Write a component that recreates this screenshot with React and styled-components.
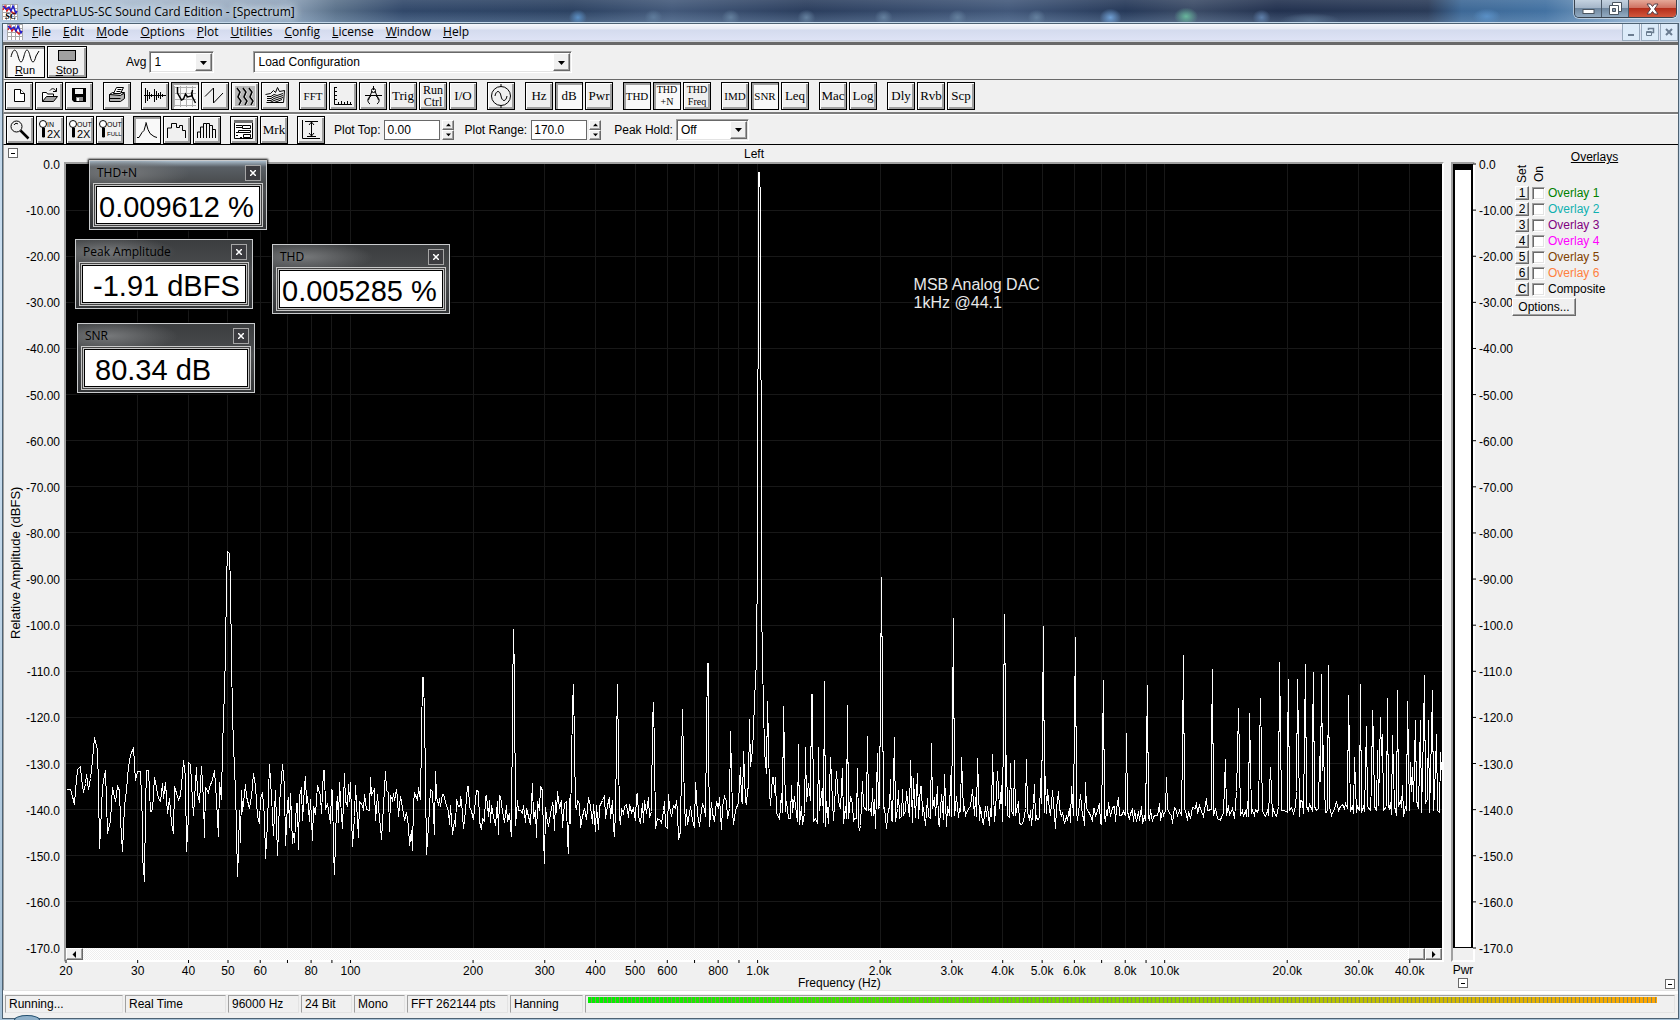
import React from 'react'
import styled, { createGlobalStyle, css } from 'styled-components'

const GlobalStyle = createGlobalStyle`
*{
  box-sizing:border-box;
}
body{
  margin:0;
  background:#f0f0f0;
  font-family:"Liberation Sans", Arial, sans-serif;
  font-size:12px;
  color:#000;
}
button, input, select{
  font:inherit;
  color:inherit;
  margin:0;
  padding:0;
}
`

const raised = css`
background:#f0f0f0;
border:1px solid;
border-color:#fff #696969 #696969 #fff;
box-shadow:inset -1px -1px #a0a0a0;
`

/* window frame */
const Window = styled.div`
height:100vh;
min-height:600px;
display:flex;
flex-direction:column;
position:relative;
overflow:hidden;
background:linear-gradient(180deg, #b4cbe0 0%, #cfe2f3 30%, #a5c0d6 100%);
`
const TitleBar = styled.header`
height:23px;
flex:none;
display:flex;
align-items:flex-start;
padding:4px 3px 0px 2px;
border-bottom:1px solid #c4d8ea;
background:
  radial-gradient(ellipse 9px 8px at 34.4% 80%, #5b8fc4, transparent),
  radial-gradient(ellipse 9px 8px at 38.9% 80%, #5f7c9c, transparent),
  radial-gradient(ellipse 9px 8px at 43.5% 80%, #64809e, transparent),
  radial-gradient(ellipse 9px 8px at 48% 80%, #64809e, transparent),
  radial-gradient(ellipse 9px 8px at 52.6% 80%, #64809e, transparent),
  radial-gradient(ellipse 9px 8px at 57% 80%, #64809e, transparent),
  radial-gradient(ellipse 9px 8px at 61.7% 80%, #64809e, transparent),
  radial-gradient(ellipse 11px 9px at 66.1% 80%, #6f9fd4, transparent),
  radial-gradient(ellipse 12px 9px at 70.6% 75%, #68b79c, transparent),
  radial-gradient(ellipse 9px 8px at 75.1% 80%, #5f80ab, transparent),
  radial-gradient(ellipse 30px 8px at 78% 95%, #57708e, transparent),
  radial-gradient(ellipse 14px 8px at 88.5% 75%, #5a90c6, transparent),
  linear-gradient(180deg, rgba(255,255,255,0.1), rgba(255,255,255,0) 50%, rgba(160,190,220,0.25)),
  linear-gradient(90deg, #b7cbe0 0%, #a3b4c8 10%, #8fa3ba 17%, #5a718a 20%, #31486a 24%, #2c4262 34%, #43597a 40%, #2b3e5e 48%, #42587a 60%, #263959 67%, #3b4b66 71%, #22314f 76%, #2a3b58 85%, #3d6896 87%, #4372a2 92%, #8eadcb 97%, #a9c3da 100%);
`
const Caption = styled.h1`
margin:0px 0px 0px 5px;
font-family:"Open Sans", sans-serif;
font-size:12px;
font-weight:400;
line-height:16px;
flex:1;
white-space:nowrap;
text-shadow:0 0 6px #dfe9f2, 0 0 8px #dfe9f2, 0 0 10px #dfe9f2;
`
const WindowButtons = styled.div`
display:flex;
height:18px;
margin-top:-4px;
border:1px solid #39434f;
border-top:none;
border-radius:0px 0px 5px 5px;
overflow:hidden;
box-shadow:0 0 0 1px rgba(255,255,255,0.5);
`
const WindowButton = styled.button`
width:${props => props.$close ? "47px" : "27px"};
border:none;
border-right:${props => props.$close ? "none" : "1px solid #4a5868"};
background:${props => props.$close
    ? "linear-gradient(180deg, #e5a898 0%, #cf7262 45%, #b52e1b 50%, #d2573c 100%)"
    : "linear-gradient(180deg, #c4d2e0 0%, #a5b6c9 45%, #6f879f 50%, #93abc2 100%)"};
display:flex;
align-items:center;
justify-content:center;
`
const Client = styled.div`
flex:1;
min-height:0;
margin:0px 1px 1px 2px;
border:1px solid #4d6273;
display:flex;
flex-direction:column;
background:#f0f0f0;
`
const MenuBar = styled.nav`
height:21px;
flex:none;
display:flex;
padding-left:4px;
border-bottom:3px solid #696969;
background:linear-gradient(180deg, #f6f8fc 0px, #e6eaf5 5px, #d4dbee 6px, #dee3f5 16px, #b4bccb 17px, #f0f0f0 18px);
`
const MenuList = styled.div`
display:flex;
flex:1;
padding-left:3px;
`
const MenuItem = styled.button`
border:none;
background:none;
padding:0px 6px;
font-family:"Open Sans", sans-serif;
font-size:12px;
line-height:16px;
height:16px;
&::first-letter{
  text-decoration:underline;
}
`
const MdiButton = styled.button`
width:18px;
height:17px;
margin-left:1px;
border:1px solid #98aabd;
border-top:none;
background:#dcebf9;
display:flex;
align-items:center;
justify-content:center;
`

/* toolbars */
const ToolRow = styled.div`
flex:none;
display:flex;
align-items:${props => props.$center ? "center" : "flex-start"};
height:${props => props.$height};
padding:${props => props.$pad};
border-left:1px solid #a0a0a0;
border-bottom:${props => props.$line};
box-shadow:${props => props.$lit ? "inset 0 1px #fff" : "none"};
`
const ToolGroup = styled.div`
display:flex;
gap:2px;
margin-right:${props => props.$gap || "10px"};
`
const toolFont = props => {
  if (props.$wide) return "11px"
  if (props.$caps) return props.$stacked ? "10px" : "11px"
  return props.$stacked ? "12px" : "13px"
}
const ToolButton = styled.button`
width:${props => props.$wide ? "40px" : "28px"};
height:${props => props.$wide ? "32px" : "28px"};
border:1px solid #000;
background:${props => props.$down ? "#f9f9f9" : "#f0f0f0"};
box-shadow:${props => props.$down
    ? "inset 2px 2px #a0a0a0"
    : "inset 1px 1px #fff, inset -2px -2px #a0a0a0"};
display:flex;
flex-direction:column;
align-items:center;
justify-content:center;
overflow:hidden;
font-family:${props => props.$wide ? "inherit" : '"Liberation Serif", "Times New Roman", serif'};
font-size:${toolFont};
line-height:12px;
`
const Field = styled.label`
display:flex;
align-items:center;
gap:4px;
margin-left:${props => props.$left || "0px"};
white-space:nowrap;
`
const Combo = styled.div`
display:flex;
width:${props => props.$width};
height:22px;
padding:1px;
background:#fff;
border:1px solid;
border-color:#a0a0a0 #fff #fff #a0a0a0;
box-shadow:inset 1px 1px #696969, inset -1px -1px #e3e3e3;
margin-left:${props => props.$left || "0px"};
select{
  flex:1;
  min-width:0;
  border:none;
  background:none;
  appearance:none;
  padding-left:3px;
  outline:none;
}
`
const ComboArrow = styled.span`
${raised}
width:17px;
display:flex;
align-items:center;
justify-content:center;
`
const TextBox = styled.input`
width:56px;
height:20px;
border:1px solid #696969;
background:#fff;
padding-left:2px;
`
const Spinner = styled.div`
display:flex;
flex-direction:column;
margin-left:-2px;
`
const SpinButton = styled.button`
${raised}
width:12px;
height:10px;
display:flex;
align-items:center;
justify-content:center;
`

/* spectrum view */
const View = styled.main`
flex:1;
min-height:0;
display:flex;
position:relative;
border-left:1px solid #a0a0a0;
border-right:1px solid #e3e3e3;
`
const Channel = styled.section`
flex:1;
min-width:0;
display:grid;
grid-template-columns:60px minmax(0, 1fr);
grid-template-rows:17px minmax(0, 1fr) 14px 28px;
`
const ToggleButton = styled.button`
width:10px;
height:10px;
border:1px solid #696969;
background:#fff;
display:flex;
align-items:center;
justify-content:center;
margin:${props => props.$margin || "0px"};
`
const ChannelTitle = styled.h2`
margin:0px;
padding-top:1px;
font-size:12px;
font-weight:400;
line-height:16px;
text-align:center;
`
const AxisColumn = styled.div`
display:flex;
padding-top:2px;
`
const AxisTitle = styled.div`
width:24px;
padding-bottom:14px;
writing-mode:vertical-rl;
transform:rotate(180deg);
text-align:center;
font-size:13px;
line-height:24px;
`
const AxisDrawing = styled.svg`
flex:1;
min-width:0;
height:100%;
overflow:visible;
font-size:12px;
`
const Plot = styled.div`
border-left:2px solid #a0a0a0;
border-top:2px solid #a0a0a0;
border-right:2px solid #fff;
background:#000;
display:grid;
svg{
  grid-area:1 / 1;
  width:100%;
  height:100%;
  display:block;
}
`
const ScrollBar = styled.div`
grid-column:2;
display:flex;
border-left:2px solid #a0a0a0;
border-right:2px solid #fff;
border-bottom:2px solid #fff;
background:repeating-conic-gradient(#fff 0% 25%, #eee 0% 50%) 0 0 / 2px 2px;
`
const ScrollButton = styled.button`
${raised}
width:17px;
height:12px;
display:flex;
align-items:center;
justify-content:center;
margin-left:${props => props.$end ? "auto" : "0px"};
`
const TimeAxis = styled.div`
grid-column:2;
padding:0px 2px;
svg{
  width:100%;
  height:28px;
}
`
const Power = styled.section`
flex:none;
width:68px;
display:grid;
grid-template-columns:24px 1fr;
grid-template-rows:17px minmax(0, 1fr) 14px 28px;
padding-left:7px;
`
const PowerBox = styled.div`
grid-row:2 / 4;
display:flex;
flex-direction:column;
border:2px solid;
border-color:#a0a0a0 #fff #fff #a0a0a0;
`
const PowerTrack = styled.div`
flex:1;
background:#000;
padding:6px 2px 1px;
display:flex;
`
const PowerBar = styled.div`
flex:1;
background:#fff;
`
const PowerFoot = styled.div`
height:12px;
`
const PowerLabel = styled.div`
grid-row:4;
grid-column:1;
display:flex;
flex-direction:column;
align-items:center;
line-height:16px;
`
const PowerAxis = styled.div`
grid-row:2;
padding-top:2px;
display:flex;
`
const Overlays = styled.aside`
flex:none;
width:165px;
display:flex;
flex-direction:column;
padding-top:5px;
`
const OverlaysTitle = styled.h2`
margin:0px;
font-size:12px;
font-weight:400;
line-height:14px;
text-align:center;
text-decoration:underline;
`
const OverlayTable = styled.table`
border-collapse:collapse;
table-layout:fixed;
margin:0px 0px 1px 3px;
width:120px;
th{
  padding:0px;
  height:21px;
  font-weight:400;
  vertical-align:top;
}
th:first-child{
  width:17px;
}
th:nth-child(2){
  width:16px;
}
td{
  padding:0px;
  height:16px;
  line-height:14px;
}
`
const Upright = styled.span`
display:block;
height:20px;
writing-mode:vertical-rl;
transform:rotate(180deg);
line-height:14px;
`
const SetButton = styled.button`
${raised}
width:14px;
height:14px;
display:block;
line-height:11px;
`
const Tick = styled.input`
appearance:none;
display:block;
width:13px;
height:13px;
background:#fff;
border:1px solid;
border-color:#a0a0a0 #fff #fff #a0a0a0;
box-shadow:inset 1px 1px #696969, inset -1px -1px #e3e3e3;
`
const OverlayName = styled.label`
color:${props => props.color};
`
const OptionsButton = styled.button`
${raised}
width:64px;
height:18px;
line-height:15px;
`

/* floating readouts */
const Readout = styled.section`
position:absolute;
left:${props => props.$x};
top:${props => props.$y};
width:178px;
height:70px;
padding:4px 3px 2px;
border:1px solid #c9cbcd;
background:
  radial-gradient(ellipse 70px 16px at 30px 12px, #77797b, transparent),
  linear-gradient(180deg, ${props => props.$active ? "#a9bccb 0px, #5a6066 6px," : "#3b3d3f 0px,"} #47494b 24px, #4d4f51 30px, #333537 100%);
box-shadow:0 0 2px 1px #000;
`
const ReadoutHead = styled.div`
display:flex;
justify-content:space-between;
height:18px;
padding:0px 2px 0px 4px;
font-family:"Open Sans", sans-serif;
font-size:12px;
line-height:15px;
`
const ReadoutClose = styled.button`
width:16px;
height:16px;
border:1px solid #a6a6a6;
background:#3c3c40;
display:flex;
align-items:center;
justify-content:center;
`
const ReadoutValue = styled.output`
display:block;
height:44px;
border:1px solid #c8c8c8;
box-shadow:inset 0 0 0 1px #444, inset 0 0 0 2px #c8c8c8, inset 0 0 0 3px #000;
background:#fff;
padding:2px 0px 0px 5px;
font-size:29px;
line-height:42px;
white-space:pre;
`

/* status bar */
const StatusBar = styled.footer`
flex:none;
height:28px;
display:flex;
gap:2px;
padding:4px 3px 6px 2px;
border-top:1px solid #e3e3e3;
box-shadow:inset 0 3px #fff;
`
const StatusCell = styled.div`
width:${props => props.$width};
flex:${props => props.$grow ? "1" : "none"};
height:18px;
border:1px solid;
border-color:#a0a0a0 #e3e3e3 #e3e3e3 #a0a0a0;
padding-left:${props => props.$grow ? "2px" : "3px"};
line-height:16px;
white-space:nowrap;
overflow:hidden;
`
const Level = styled.div`
margin:1px 17px 0px 0px;
height:6px;
background:
  repeating-linear-gradient(90deg, transparent 0px 3px, #87875f 3px 4px),
  linear-gradient(90deg, #00f000, #9ccb00 60%, #ffa500);
`
const StartOrb = styled.div`
position:absolute;
left:14px;
bottom:0px;
width:26px;
height:5px;
border:1px solid #24506f;
border-bottom:none;
border-radius:13px 13px 0px 0px / 5px 5px 0px 0px;
background:#8fb0c9;
`

const ink = { fill: 'none', stroke: '#000', strokeWidth: 1 }

const icons = {
  newFile: <g fill="#fff" stroke="#000"><path d="M9.500 7.500h6l4 4v8h-10z" /><path d="M15.500 7.500v4h4" /></g>,
  open: <g stroke="#000"><path d="M7.500 19.500v-9h4l1 1.500h6v3" fill="#fff" /><path d="M7.500 19.500l4-5h11l-4 5z" fill="#a0a0a0" /><path d="M15 8.500c2-3 5-2 6 1M21.500 6v3.500H18" fill="none" /></g>,
  save: <g><path d="M7 6h14v14H9l-2-2z" fill="#000" /><path d="M10 7h8v5h-8z" fill="#f0f0f0" /><path d="M11 15h7v4h-7z" fill="#909090" /><path d="M12 16h2v3h-2z" fill="#fff" /></g>,
  print: <g stroke="#000"><path d="M6.500 12.500h11l4-1v5l-4 3h-11z" fill="#b0b0b0" /><path d="M6.500 12.500l3-2h12l-4 3z" fill="#e0e0e0" /><path d="M10.500 11.500l3-6h7l-3 6z" fill="#fff" /><path d="M14.500 7.500h4M13.500 9.500h4" fill="none" /><path d="M6.500 16.500h11" fill="none" /></g>,
  wave: <path d="M3 13.500h22M4.500 6v15M6.500 8v11M8.500 10v7M10.500 12v3M13.500 7v13M15.500 9v9M17.500 11v5M19.500 10v7M21.500 12v3" {...ink} />,
  spectrum: <g fill="none"><path d="M3.500 4v21M9.500 4v21M15.500 4v21M21.500 4v21M3 5.500h22M3 11.500h22M3 17.500h22M3 23.500h22" stroke="#b0b0b0" /><path d="M6.500 5v6l4 7 2-1 2-5 2 3 4-1 1-6M20.500 10l1 5 3 6" stroke="#000" strokeWidth="1.500" /></g>,
  zigzag: <path d="M4 14.500L12.500 6v15L22 11" {...ink} />,
  waterfall: <g fill="none"><rect x="4" y="4" width="20" height="20" fill="#b8b8b8" /><path d="M7 6l3 4-2 5 3 4-2 4M13 6l3 4-2 5 3 4-2 4M19 6l3 4-2 5 3 4-2 4" stroke="#fff" /><path d="M6 6l3 4-2 5 3 4-2 4M12 6l3 4-2 5 3 4-2 4M18 6l3 4-2 5 3 4-2 4" stroke="#000" strokeWidth="1.500" /></g>,
  surface: <g {...ink}><path d="M4.500 12.500l5-1 3-3 2 2 2-5 2 4 5-1-1 12H5.500" /><path d="M6 14.500h4l3-2 3 1 6-2M6 16.500h4l3-2 3 1 6-2M6 18.500h4l3-2 3 1 6-2M9 20.500l4-2 3 1 5-2" /></g>,
  ruler: <path d="M5.500 5v17.500H23M6 5.500h2M6 9.500h2M6 13.500h2M6 17.500h2M9.500 22v-2M12.500 22v-3M15.500 22v-2M18.500 22v-3M21.500 22v-2" {...ink} />,
  compass: <g {...ink}><path d="M14.500 4v4M6 13.500h17M13 9L9.500 18M16 9l3.500 9" /><circle cx="14.500" cy="8.500" r="2" /><path d="M12 14c-4 2-4 6-1 8M17 14c4 2 4 6 1 8" /></g>,
  generator: <g {...ink}><circle cx="14" cy="14" r="9.500" /><path d="M14 2v3M14 23v3M8 14c1-6 5-6 6 0s5 6 6 0" /></g>,
  zoom: <g {...ink}><circle cx="10.500" cy="10.500" r="5.500" /><path d="M14.500 14.500l8 8" strokeWidth="2.500" /><path d="M8 9c1-2 3-2 4-1" /></g>,
  peak: <path d="M4 21.500h2l3-5 2-2 2-7v-1l2 7 2 4 4 3 3 1" {...ink} />,
  steps: <path d="M4.500 22v-10h4V7.500h5v4h3v-2h3v5h3V22" {...ink} />,
  bars: <path d="M4.500 22v-6h3v6M7.500 22v-11h3v11M10.500 22V7.500h3V22M13.500 7.500h3V22M16.500 9.500h3V22M19.500 13.500h3V22" {...ink} />,
  settings: <g><path d="M4.500 5.500h18v17h-18z" fill="#fff" stroke="#000" /><path d="M4 4h19v3H4z" fill="#707070" /><path d="M6 9.500h6M6 11.500h6M6 19.500h2M10 21.500h2M6 16.500h4" stroke="#000" /><path d="M12.500 9.500h8v3h-8zM8.500 14.500h12v2h-12zM13.500 18.500h7v3h-7z" fill="#fff" stroke="#000" /></g>,
  fit: <path d="M5.500 4v18.500H23M8 5.500h13M14.500 6v14M12 9l2.500-3L17 9M12 17l2.500 3 2.500-3M10 20.500h9" {...ink} />,
}

const Icon = ({ name }) => (
  <svg width="26" height="26" viewBox="1 1 26 26" aria-hidden="true">{icons[name]}</svg>
)

/* lens glyph with a caption, e.g. IN 2X */
const ZoomIcon = ({ top, bottom, small }) => (
  <svg width="26" height="26" viewBox="1 1 26 26" fontFamily="Liberation Sans, Arial, sans-serif">
    <circle cx="7" cy="8" r="3.500" fill="#fff" stroke="#000" />
    <path d="M6.500 12h2v9h-2z" fill="#000" stroke="#000" />
    <text x="11" y="11" fontSize="7">{top}</text>
    <text x="11" y={small ? "20" : "22"} fontSize={small ? "6" : "11"}>{bottom}</text>
  </svg>
)

const AppIcon = ({ label }) => (
  <svg width="16" height="16" viewBox="0 0 16 16" aria-hidden="true">
    <rect width="16" height="16" fill="#fff" />
    <path d="M0 .5h16M0 4.500h16M0 8.500h16M0 12.500h16M.5 0v16M4.500 0v16M8.500 0v16M12.500 0v16M15.500 0v16" stroke="#a8a8a8" />
    <path d="M1 6l2-4 2 5 2-3 2 3 3 3 3-3" fill="none" stroke="#d22" strokeWidth="1.500" />
    <path d="M1 2l3 3 3-2 2 4 2-5 3 7 1-2" fill="none" stroke="#22c" strokeWidth="1.500" />
    {label && <text x="3" y="15" fontSize="9" fontStyle="italic" fontWeight="700" fontFamily="Liberation Serif, serif">SC</text>}
  </svg>
)

const Arrow = ({ d, size = 7 }) => (
  <svg width={size} height={size} viewBox="0 0 7 7" aria-hidden="true"><path d={d} fill="#000" /></svg>
)
const DOWN = "M0 2h7L3.500 6z"
const UP = "M0 6h7L3.500 2z"
const LEFT = "M5 0v7L1.500 3.500z"
const RIGHT = "M2 0v7l3.500-3.500z"

const menus = ["File", "Edit", "Mode", "Options", "Plot", "Utilities", "Config", "License", "Window", "Help"]

const mainTools = [
  [{ icon: "newFile" }, { icon: "open" }, { icon: "save" }],
  [{ icon: "print" }],
  [{ icon: "wave" }, { icon: "spectrum", down: true }, { icon: "zigzag" }, { icon: "waterfall" }, { icon: "surface" }],
  [{ text: ["FFT"], caps: true }, { icon: "ruler" }, { icon: "compass" }, { text: ["Trig"] }, { text: ["Run", "Ctrl"] }, { text: ["I/O"] }],
  [{ icon: "generator" }],
  [{ text: ["Hz"] }, { text: ["dB"], down: true }, { text: ["Pwr"] }],
  [{ text: ["THD"], caps: true, down: true }, { text: ["THD", "+N"], caps: true, down: true }, { text: ["THD", "Freq"], caps: true }],
  [{ text: ["IMD"], caps: true }, { text: ["SNR"], caps: true, down: true }, { text: ["Leq"] }],
  [{ text: ["Mac"] }, { text: ["Log"] }],
  [{ text: ["Dly"] }, { text: ["Rvb"] }, { text: ["Scp"] }],
]

const overlays = [
  ["1", "Overlay 1", "#008000"],
  ["2", "Overlay 2", "#10b0b0"],
  ["3", "Overlay 3", "#800080"],
  ["4", "Overlay 4", "#ff00ff"],
  ["5", "Overlay 5", "#804000"],
  ["6", "Overlay 6", "#ff8040"],
  ["C", "Composite", "#000"],
]

const readouts = [
  { name: "THD+N", value: "0.009612 %", x: "85px", y: "15px", active: true },
  { name: "Peak Amplitude", value: " -1.91 dBFS", x: "71px", y: "94px" },
  { name: "THD", value: "0.005285 %", x: "268px", y: "99px" },
  { name: "SNR", value: " 80.34 dB", x: "73px", y: "178px" },
]

const status = [
  ["Running...", "118px"],
  ["Real Time", "101px"],
  ["96000 Hz", "71px"],
  ["24 Bit", "51px"],
  ["Mono", "51px"],
  ["FFT 262144 pts", "101px"],
  ["Hanning", "73px"],
]

const levels = [...Array(18).keys()].map(i => {
  const db = i * 10
  return { label: i === 0 ? "0.0" : db < 100 ? `-${db}.00` : `-${db}.0`, y: `${i / 17 * 100}%` }
})

const F_MIN = 20
const F_MAX = 48000
const freqX = f => `${Math.log(f / F_MIN) / Math.log(F_MAX / F_MIN) * 100}%`
const freqs = [10, 100, 1000, 10000]
  .flatMap(d => [1, 2, 3, 4, 5, 6, 7, 8, 9].map(m => m * d))
  .filter(f => f >= F_MIN && f < F_MAX)
const freqLabel = f => {
  if (/^[79]/.test(String(f))) return null
  return f < 1000 ? String(f) : `${(f / 1000).toFixed(1)}k`
}

// spectrum samples, four sweeps with their own origin, in thirds of a plot unit
const sweeps = [
  {
    x: -6, y: 376, points: `18,748 32,748 37,770 43,793 47,750 52,688 61,680 65,715 70,757 75,730 80,703 85,748 90,715 95,690 103,592 112,630 114,740 118,926 122,870 127,740 136,691 140,780 143,880 150,840 157,742 166,784 173,739 178,752 182,840 187,934 193,800 200,750 205,680 210,645 220,622 226,720 233,694 241,694 246,850 248,950 253,1024 257,800 260,691 265,691 271,814 277,812 283,712 295,775 301,784 307,730 310,775 316,728 323,820 328,775 334,850 340,880 344,740 355,778 361,765 366,700 370,661 376,712 380,934 384,830 386,668 391,672 396,780 400,826 405,730 409,682 413,760 418,787 422,730 425,679 430,780 433,892 437,742 445,757 450,730 455,730 463,691 468,780 475,889 478,728 484,778 488,620 491,540 496,345 500,125 502,35 508,40 511,140 514,355 517,525 520,610 524,690 527,745 530,870 532,1010 536,930 538,812 541,908 544,752 548,815 556,733 560,770 568,805 573,770 580,700 586,740 592,828 598,850 602,775 608,757 612,830 616,956 621,850 628,673 633,770 640,886 647,752 652,946 658,790 668,673 672,740 676,916 682,790 685,772 688,862 691,760 697,910 701,880 704,907 710,790 712,790 715,928 719,770 725,742 728,840 732,740 736,710 740,790 743,770 748,845 752,778 757,902 761,800 767,822 772,736 780,765 784,820 789,691 793,691 797,808 802,790 811,850 815,748 818,750 821,935 823,1004 828,800 833,770 836,848 839,728 843,826 848,865 853,700 857,785 862,796 866,733 868,785 872,728 877,920 883,830 887,737 890,790 895,892 899,785 908,796 911,810 914,763 920,808 928,812 931,712 935,766 942,745 946,841 952,763 957,835 962,860 965,898 971,800 976,694 980,750 984,758 988,875 992,766 998,780 1001,760 1004,780 1009,748 1013,775 1016,829 1020,768 1030,820 1034,841 1038,817 1044,860 1048,916 1053,870 1057,932 1061,790 1064,758 1073,780 1076,742 1082,778 1084,595 1087,412 1091,412 1093,530 1095,715 1099,943 1104,860 1111,748 1118,755 1123,884 1126,695 1130,770 1136,796 1139,775 1142,800 1146,763 1150,763 1158,795 1166,815 1169,853 1171,797 1177,883 1183,840 1186,860 1190,778 1194,799 1200,795`,
  },
  {
    x: 394, y: 436, points: `2,590 5,600 11,685 17,630 23,559 26,559 29,620 35,635 41,658 48,572 55,575 59,665 64,689 68,655 73,665 76,590 80,586 85,650 89,600 92,668 95,615 100,650 107,676 112,605 115,704 119,586 122,590 128,635 133,667 139,616 143,665 149,640 152,680 154,710 158,300 160,88 163,230 166,676 172,600 176,632 182,630 187,640 190,616 196,667 200,625 205,650 211,673 217,550 221,655 226,632 229,713 233,605 238,630 242,560 246,570 250,715 253,791 257,622 260,650 266,680 272,640 277,610 280,620 283,692 287,602 290,638 293,574 298,625 304,600 308,682 313,610 319,603 323,720 325,761 328,596 332,670 337,320 340,253 343,435 346,620 350,628 353,602 358,610 362,682 367,650 373,626 379,658 385,593 391,620 397,670 401,614 407,694 410,617 415,689 419,620 427,600 433,587 437,655 443,617 448,592 452,655 457,602 460,680 463,710 467,632 469,445 472,253 475,455 478,652 481,673 485,626 490,640 494,620 499,614 505,652 508,614 514,638 520,625 526,661 529,584 532,580 536,648 541,670 547,610 550,667 554,602 560,640 565,593 569,652 574,635 577,365 580,307 583,455 586,685 592,656 601,662 604,670 610,630 613,605 617,680 622,685 625,584 629,620 634,649 640,616 645,625 648,600 652,635 655,718 661,695 664,490 667,328 670,485 673,605 677,677 680,628 683,673 687,640 692,620 697,660 703,683 706,547 711,640 718,680 723,630 728,610 733,628 737,650 740,395 742,190 745,190 746,435 748,680 754,607 758,640 763,664 769,605 776,625 779,593 784,688 788,620 794,590 799,605 803,655 808,625 811,394 814,520 817,632 821,673 826,632 836,607 838,550 841,502 845,600 848,610 850,454 855,605 860,610 863,570 866,560 868,358 872,500 877,450 880,390 884,300 889,180 891,-150 895,-1200 896,-1282 898,-1282 901,-1200 903,-150 905,0 908,190 911,312 914,455 919,520 922,304 925,430 928,575 932,616 938,532 940,532 944,578 947,532 950,638 958,658 963,580 967,636 970,319 973,470 976,635 980,605 986,655 990,655 994,556 998,637 1003,590 1007,620 1012,665 1015,433 1019,673 1024,620 1028,673 1032,640 1037,442 1040,605 1046,550 1050,600 1054,283 1057,283 1060,664 1066,655 1073,670 1075,442 1079,630 1084,580 1088,565 1091,668 1093,244 1096,680 1100,605 1105,670 1111,472 1116,605 1121,662 1129,515 1134,605 1140,625 1147,505 1151,670 1157,620 1159,655 1162,316 1165,656 1172,590 1176,610 1180,665 1184,655 1190,655 1192,505 1196,675 1198,690`,
  },
  {
    x: 794, y: 396, points: `2,795 7,664 11,740 18,750 22,529 26,750 32,745 34,765 38,685 41,765 43,718 46,806 52,580 56,745 59,740 61,393 64,52 67,400 69,745 73,742 79,806 84,745 87,745 91,658 95,780 98,785 103,532 107,785 111,745 115,691 119,775 124,770 127,688 131,765 136,750 139,695 145,745 148,770 151,601 157,787 160,655 166,772 172,640 176,775 182,679 184,679 188,765 191,742 196,797 202,715 206,770 211,775 214,550 218,745 223,712 227,765 232,680 236,790 239,800 245,703 250,778 253,643 259,800 263,740 268,765 271,646 275,770 277,475 280,175 284,765 290,710 295,772 299,745 301,755 304,592 309,755 314,738 317,765 325,745 332,738 337,688 343,767 347,712 350,770 352,595 357,780 362,742 367,785 371,790 376,740 380,770 383,740 388,795 392,745 394,768 397,583 402,785 407,755 412,634 417,745 421,718 424,676 428,783 431,470 433,163 436,450 437,735 439,586 443,765 448,772 451,610 455,750 460,765 463,601 467,765 475,725 479,790 485,793 491,785 496,745 499,598 502,755 507,780 511,750 515,795 519,730 523,673 527,780 530,770 533,777 538,775 541,655 545,730 548,480 550,199 553,757 556,650 560,760 563,688 567,748 572,765 577,691 582,765 586,805 590,745 596,694 599,745 605,770 608,758 614,790 618,770 621,780 628,745 632,787 635,679 640,765 644,470 646,232 649,750 652,782 658,730 661,703 666,770 670,770 673,796 676,667 680,745 686,755 692,765 696,785 700,745 703,745 707,770 712,750 718,730 722,790 725,792 727,560 730,361 733,765 737,785 739,752 742,765 746,727 752,770 757,742 763,738 767,785 770,745 775,712 779,765 785,765 790,755 796,765 799,520 802,755 807,778 812,760 817,748 821,785 824,752 829,785 835,755 839,780 843,738 848,790 852,770 857,780 860,565 862,376 865,770 868,780 872,748 878,785 881,770 886,765 892,765 896,750 898,730 901,782 908,750 910,765 915,750 920,652 923,745 928,760 934,765 938,790 943,742 946,745 952,765 958,752 963,765 966,560 970,286 973,745 979,762 982,782 986,755 991,775 998,742 1005,745 1010,728 1013,760 1017,735 1025,755 1031,770 1040,715 1043,750 1053,748 1055,545 1057,328 1060,765 1066,745 1072,775 1080,780 1085,770 1090,760 1093,675 1096,598 1099,765 1105,735 1109,765 1117,745 1124,775 1130,695 1132,585 1135,445 1138,595 1141,765 1147,752 1150,768 1157,750 1159,770 1163,725 1165,770 1168,460 1171,612 1173,760 1177,750 1183,765 1186,748 1191,758 1196,745`,
  },
  {
    x: 1114, y: 456, points: `239,400 241,235 244,400 246,570 250,580 256,588 262,572 265,587 268,515 271,442 274,515 276,588 280,565 284,580 290,590 296,560 298,127 301,325 304,570 312,572 321,578 323,375 325,178 328,570 334,562 340,580 346,560 348,515 352,178 355,355 358,588 361,540 366,545 371,580 374,350 376,133 379,560 385,570 389,550 396,575 398,350 400,157 403,560 408,570 415,565 418,410 421,485 424,163 427,450 430,375 434,500 437,578 442,575 445,136 449,560 454,587 462,565 470,545 475,570 481,560 488,553 492,565 496,550 502,565 505,226 508,400 510,575 517,555 520,580 523,412 528,578 532,560 538,570 541,193 544,578 550,560 553,575 559,319 563,560 571,570 574,490 577,271 580,360 583,560 589,570 592,391 596,555 601,292 604,405 607,343 611,570 619,560 622,235 625,560 628,565 631,548 635,583 637,346 642,560 646,570 649,585 652,211 656,560 660,540 665,562 668,496 671,588 675,560 679,570 683,244 687,570 691,427 694,515 697,442 701,545 706,301 710,540 716,565 721,301 725,578 730,338 733,166 737,550 741,535 745,301 749,578 754,345 757,211 761,570 766,445 769,343 773,570 779,578 782,397 785,450`,
  },
]
const trace = sweeps
  .flatMap(s => s.points.split(" ").map(p => {
    const [x, y] = p.split(",").map(Number)
    return `${Math.floor(s.x + x / 3)},${Math.floor(s.y + y / 3)}`
  }))
  .join(" ")

const Tool = ({ tool }) => (
  <ToolButton type="button" aria-label={tool.icon} $down={tool.down} $caps={tool.caps} $stacked={tool.text?.length > 1}>
    {tool.icon ? <Icon name={tool.icon} /> : tool.text.map(t => <span key={t}>{t}</span>)}
  </ToolButton>
)

const Select = ({ id, value, width, left }) => (
  <Combo $width={width} $left={left}>
    <select id={id} aria-label={value} defaultValue={value}><option>{value}</option></select>
    <ComboArrow><Arrow d={DOWN} /></ComboArrow>
  </Combo>
)

const SpinField = ({ label, value, left }) => (
  <Field as="div" $left={left}>
    <label htmlFor={label}>{label}</label>
    <TextBox id={label} defaultValue={value} />
    <Spinner>
      <SpinButton type="button" aria-label="Increase"><Arrow d={UP} size={5} /></SpinButton>
      <SpinButton type="button" aria-label="Decrease"><Arrow d={DOWN} size={5} /></SpinButton>
    </Spinner>
  </Field>
)

const Toggle = ({ margin }) => (
  <ToggleButton type="button" aria-label="Collapse" $margin={margin}>
    <svg width="4" height="1"><rect width="4" height="1" /></svg>
  </ToggleButton>
)

const Spectrum = () => (
  <Plot>
    <svg shapeRendering="crispEdges">
      {levels.slice(1, -1).map(l => <line key={l.label} x1="0" x2="100%" y1={l.y} y2={l.y} stroke="#181818" />)}
      {freqs.slice(1).map(f => <line key={f} x1={freqX(f)} x2={freqX(f)} y1="0" y2="100%" stroke="#181818" />)}
    </svg>
    <svg viewBox="0 0 1376 784" preserveAspectRatio="none" shapeRendering="crispEdges">
      <polyline points={trace} transform="translate(0.5 0.5)" fill="none" stroke="#fff" />
    </svg>
    <svg fill="#e8e8e8" fontSize="16">
      <text x="61.600%" y="126">MSB Analog DAC</text>
      <text x="61.600%" y="144">1kHz @44.1</text>
    </svg>
  </Plot>
)

const App = () => {
  return (
    <Window>
      <GlobalStyle />
      <TitleBar>
        <AppIcon label />
        <Caption>SpectraPLUS-SC Sound Card Edition - [Spectrum]</Caption>
        <WindowButtons>
          <WindowButton type="button" aria-label="Minimize">
            <svg width="13" height="12"><rect x="1" y="6.500" width="11" height="4" fill="#fff" stroke="#4a5560" /></svg>
          </WindowButton>
          <WindowButton type="button" aria-label="Restore">
            <svg width="13" height="13" fill="#fff" stroke="#4a5560"><path d="M3.500.5h9v9h-9z" /><path d="M.5 3.500h9v9h-9z" /><path d="M3.500 6.500h3v3h-3z" fill="#8ca0b5" /></svg>
          </WindowButton>
          <WindowButton type="button" aria-label="Close" $close>
            <svg width="13" height="12"><path d="M1 1h3.500l2 2.500L8.500 1H12L8.500 6l3.500 5H8.500l-2-2.500L4.500 11H1l3.500-5z" fill="#fff" stroke="#54404a" /></svg>
          </WindowButton>
        </WindowButtons>
      </TitleBar>
      <Client>
        <MenuBar>
          <AppIcon />
          <MenuList>
            {menus.map(m => <MenuItem type="button" key={m}>{m}</MenuItem>)}
          </MenuList>
          <MdiButton type="button" aria-label="Minimize view"><svg width="10" height="10"><rect x="2" y="7" width="6" height="2" fill="#6b7d91" /></svg></MdiButton>
          <MdiButton type="button" aria-label="Restore view"><svg width="10" height="10" fill="none" stroke="#6b7d91"><path d="M3.500 3V1.500h5v4H7" strokeWidth="1.500" /><path d="M1.500 4.500h5v4h-5zM1 5.500h6" /></svg></MdiButton>
          <MdiButton type="button" aria-label="Close view"><svg width="10" height="10"><path d="M2 2l6 6M8 2L2 8" stroke="#6b7d91" strokeWidth="2" /></svg></MdiButton>
        </MenuBar>

        <ToolRow $center $height="35px" $pad="0px 1px" $line="1px solid #696969">
          <ToolGroup $gap="39px">
            <ToolButton type="button" $wide $down>
              <svg width="30" height="16"><path d="M1 9C3 0 6 0 8 8s4 8 6 0 4-8 6 0 4 8 6 0l3-5" {...ink} /></svg>
              <span><u>R</u>un</span>
            </ToolButton>
            <ToolButton type="button" $wide>
              <svg width="20" height="16"><rect x="1.500" y="2.500" width="17" height="10" fill="#a0a0a0" stroke="#000" /></svg>
              <span><u>S</u>top</span>
            </ToolButton>
          </ToolGroup>
          <Field htmlFor="avg">Avg</Field>
          <Select id="avg" value="1" width="65px" left="3px" />
          <Select id="config" value="Load Configuration" width="319px" left="39px" />
        </ToolRow>

        <ToolRow $height="34px" $pad="2px 1px" $line="2px solid #7c7c7c">
          {mainTools.map((group, i) => (
            <ToolGroup key={i}>
              {group.map((tool, j) => <Tool key={j} tool={tool} />)}
            </ToolGroup>
          ))}
        </ToolRow>

        <ToolRow $center $lit $height="31px" $pad="1px 2px 0px" $line="1px solid #000">
          <ToolGroup $gap="9px">
            <Tool tool={{ icon: "zoom" }} />
            <ToolButton type="button"><ZoomIcon top="IN" bottom="2X" /></ToolButton>
            <ToolButton type="button"><ZoomIcon top="OUT" bottom="2X" /></ToolButton>
            <ToolButton type="button"><ZoomIcon top="OUT" bottom="FULL" small /></ToolButton>
          </ToolGroup>
          <ToolGroup $gap="9px">
            <Tool tool={{ icon: "peak", down: true }} />
            <Tool tool={{ icon: "steps" }} />
            <Tool tool={{ icon: "bars" }} />
          </ToolGroup>
          <ToolGroup $gap="9px">
            <Tool tool={{ icon: "settings" }} />
            <Tool tool={{ text: ["Mrk"] }} />
          </ToolGroup>
          <ToolGroup $gap="9px">
            <Tool tool={{ icon: "fit" }} />
          </ToolGroup>
          <SpinField label="Plot Top:" value="0.00" />
          <SpinField label="Plot Range:" value="170.0" left="10px" />
          <Field htmlFor="hold" $left="13px">Peak Hold:</Field>
          <Select id="hold" value="Off" width="73px" left="3px" />
        </ToolRow>

        <View>
          <Channel>
            <Toggle margin="3px 4px" />
            <ChannelTitle>Left</ChannelTitle>
            <AxisColumn>
              <AxisTitle>Relative Amplitude (dBFS)</AxisTitle>
              <AxisDrawing>
                {levels.map(l => (
                  <g key={l.label}>
                    <text x="32" y={l.y} dy="5" textAnchor="end">{l.label}</text>
                    <line x1="36" x2="38" y1={l.y} y2={l.y} stroke="#000" />
                  </g>
                ))}
              </AxisDrawing>
            </AxisColumn>
            <Spectrum />
            <ScrollBar>
              <ScrollButton type="button" aria-label="Scroll left"><Arrow d={LEFT} /></ScrollButton>
              <ScrollButton type="button" aria-label="Scroll thumb" $end />
              <ScrollButton type="button" aria-label="Scroll right"><Arrow d={RIGHT} /></ScrollButton>
            </ScrollBar>
            <TimeAxis>
              <AxisDrawing>
                {freqs.map(f => (
                  <g key={f}>
                    <line x1={freqX(f)} x2={freqX(f)} y1="-2" y2="1" stroke="#000" />
                    <text x={freqX(f)} y="13" textAnchor="middle">{freqLabel(f)}</text>
                  </g>
                ))}
                <text x="56.200%" y="25" textAnchor="middle">Frequency (Hz)</text>
              </AxisDrawing>
            </TimeAxis>
          </Channel>

          <Power>
            <PowerBox>
              <PowerTrack><PowerBar /></PowerTrack>
              <PowerFoot />
            </PowerBox>
            <PowerAxis>
              <AxisDrawing>
                {levels.map(l => (
                  <g key={l.label}>
                    <line x1="-2" x2="1" y1={l.y} y2={l.y} stroke="#000" />
                    <text x="4" y={l.y} dy="5">{l.label}</text>
                  </g>
                ))}
              </AxisDrawing>
            </PowerAxis>
            <PowerLabel>
              Pwr
              <Toggle />
            </PowerLabel>
          </Power>

          <Overlays>
            <OverlaysTitle>Overlays</OverlaysTitle>
            <OverlayTable>
              <thead>
                <tr>
                  <th><Upright>Set</Upright></th>
                  <th><Upright>On</Upright></th>
                  <th />
                </tr>
              </thead>
              <tbody>
                {overlays.map(([key, name, color]) => (
                  <tr key={key}>
                    <td><SetButton type="button">{key}</SetButton></td>
                    <td><Tick type="checkbox" id={`overlay-${key}`} /></td>
                    <td><OverlayName htmlFor={`overlay-${key}`} color={color}>{name}</OverlayName></td>
                  </tr>
                ))}
              </tbody>
            </OverlayTable>
            <OptionsButton type="button">Options...</OptionsButton>
            <Toggle margin="auto 2px 1px auto" />
          </Overlays>

          {readouts.map(r => (
            <Readout key={r.name} $x={r.x} $y={r.y} $active={r.active}>
              <ReadoutHead>
                {r.name}
                <ReadoutClose type="button" aria-label={`Close ${r.name}`}>
                  <svg width="6" height="6"><path d="M0 0l6 6M6 0L0 6" stroke="#fff" strokeWidth="1.500" /></svg>
                </ReadoutClose>
              </ReadoutHead>
              <ReadoutValue>{r.value}</ReadoutValue>
            </Readout>
          ))}
        </View>

        <StatusBar>
          {status.map(([text, width]) => <StatusCell key={text} $width={width}>{text}</StatusCell>)}
          <StatusCell $grow><Level /></StatusCell>
        </StatusBar>
      </Client>
      <StartOrb />
    </Window>
  )
}

export default App
